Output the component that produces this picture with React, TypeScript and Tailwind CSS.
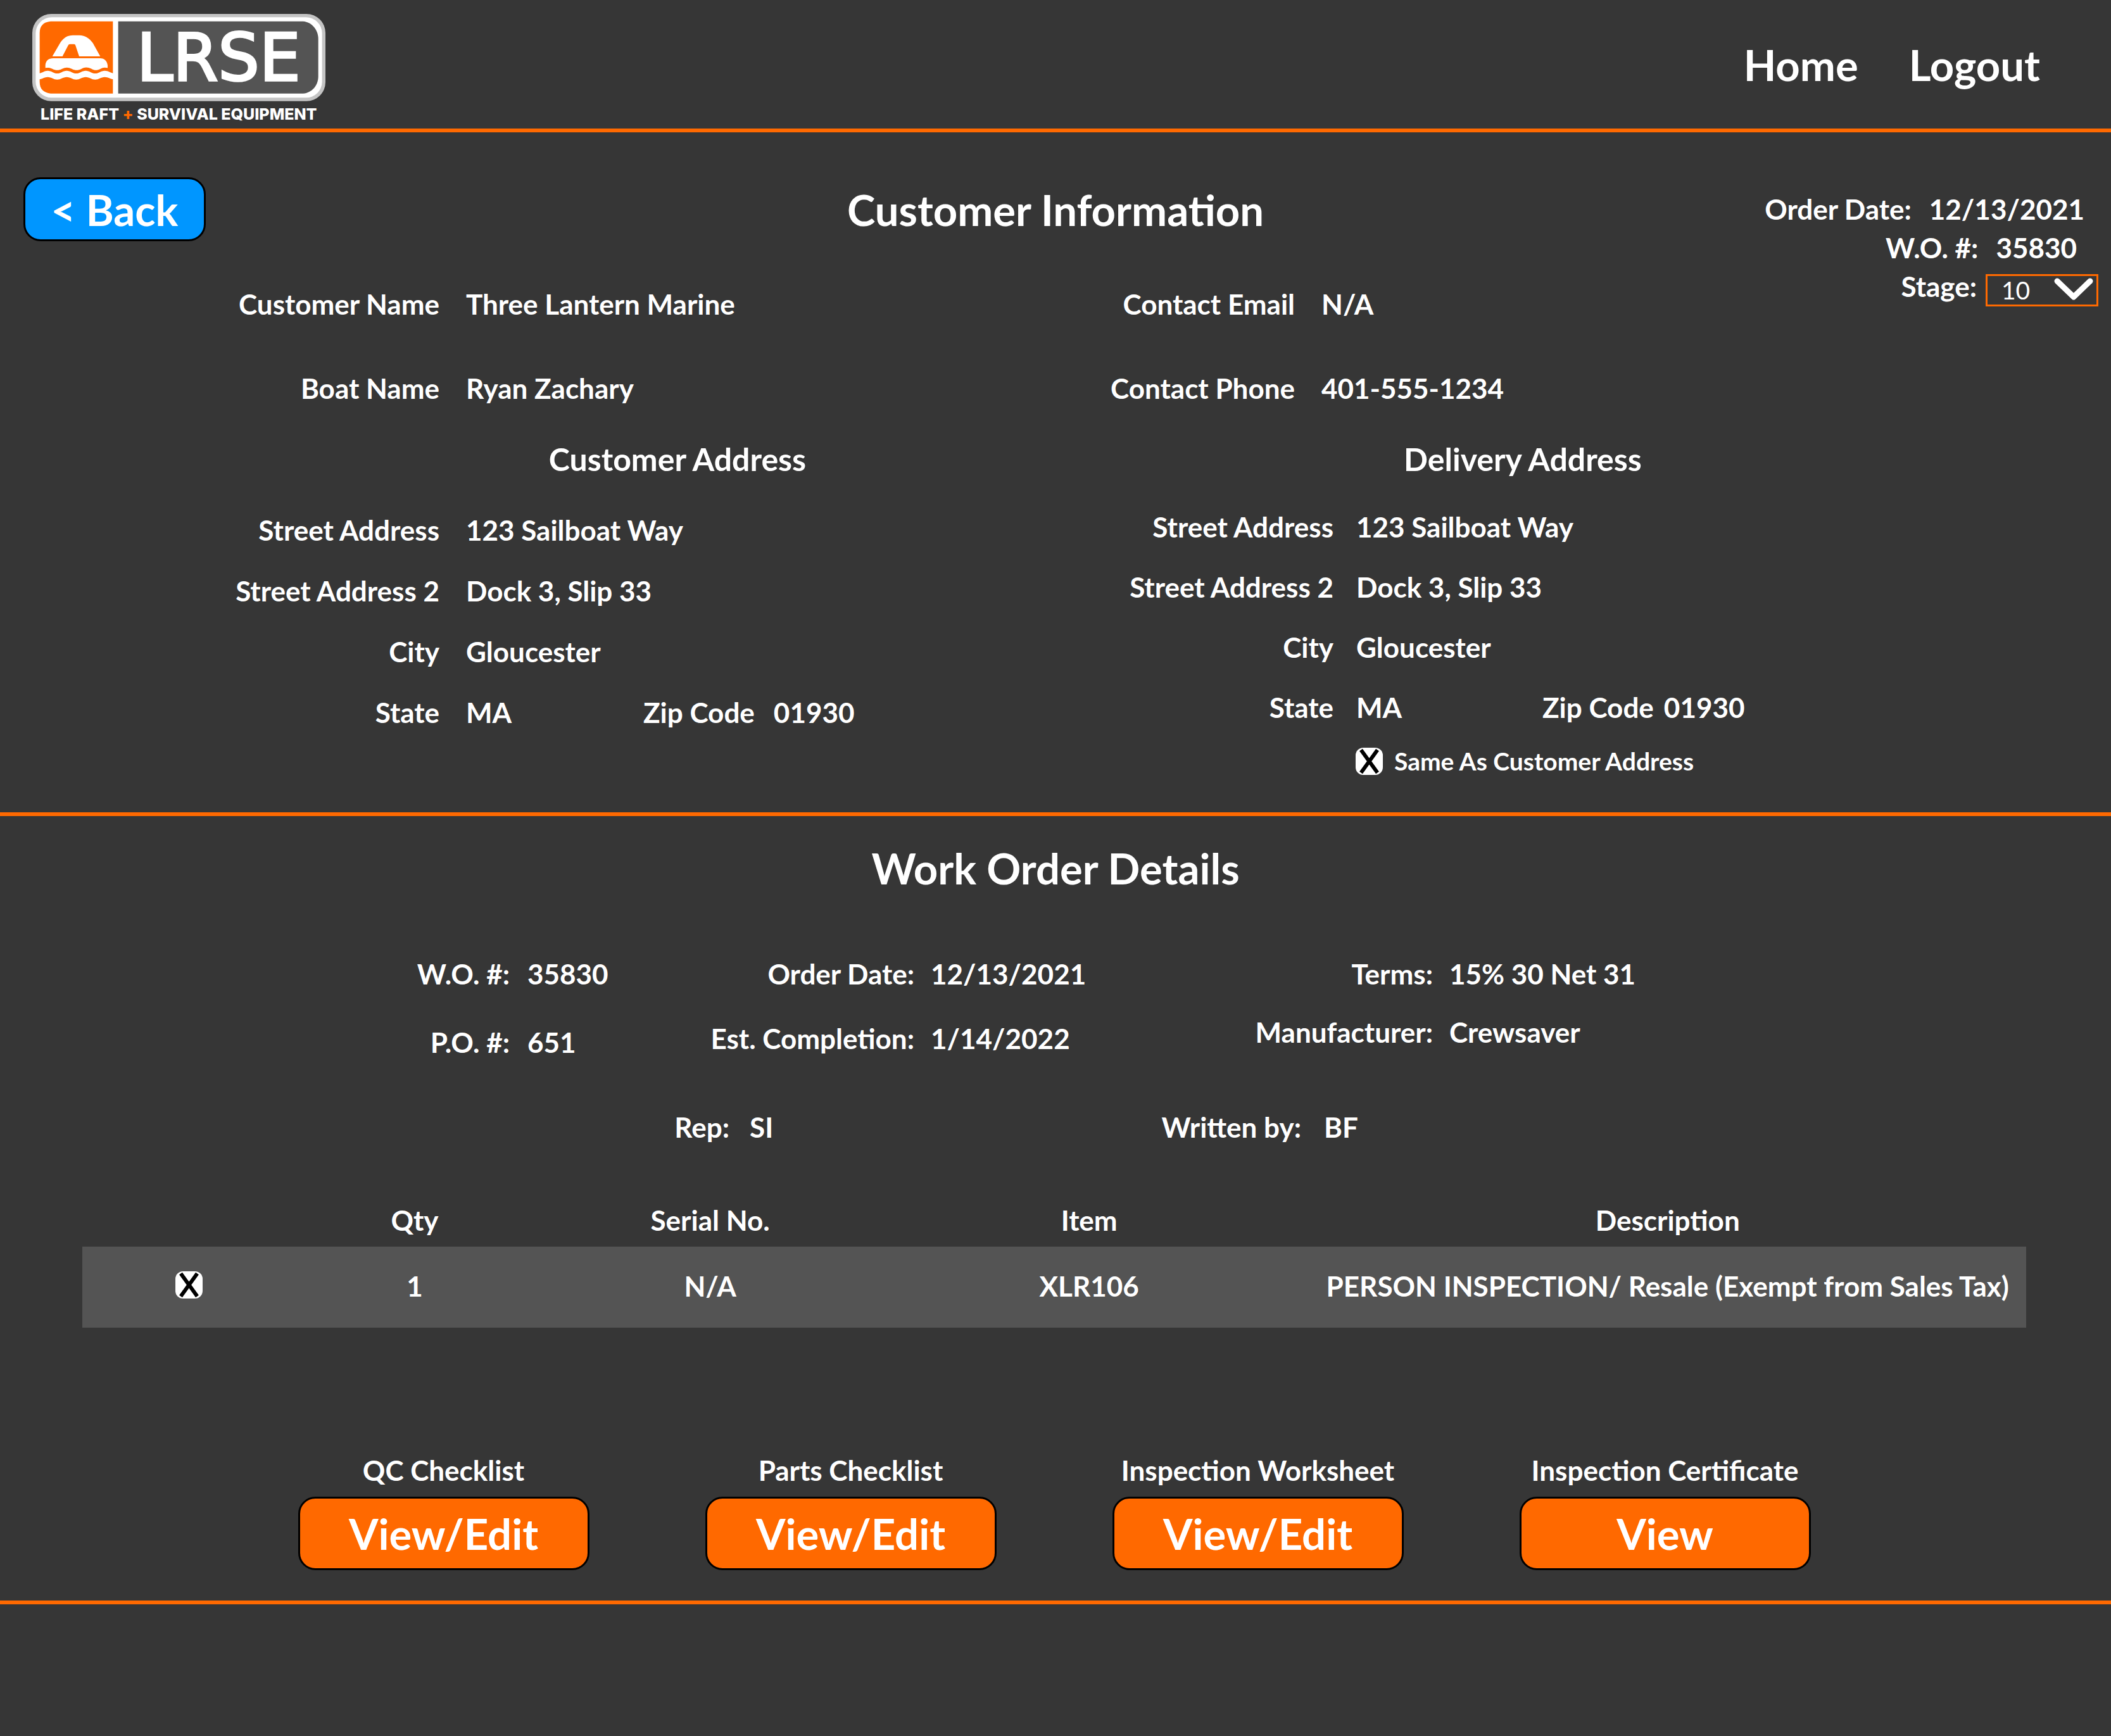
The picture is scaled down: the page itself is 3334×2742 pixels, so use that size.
import { useState, type ReactNode } from "react";

type FieldItem = { label: string; value: ReactNode };

function Logo() {
  return (
    <svg viewBox="60 60 1401 549" className="h-[183px] w-[467px]" role="img" aria-label="LRSE Life Raft + Survival Equipment">
      <rect x="63" y="66" width="1389" height="413" rx="90" fill="#c4c4c4" />
      <rect x="79" y="82" width="1357" height="381" rx="76" fill="#ffffff" />
      <path d="M150 101H445V443H150Q98 438 98 388V156Q98 106 150 101Z" fill="#ff6900" />
      <path d="M470 101H1346C1388 104 1418 142 1418 184V362C1418 404 1388 440 1346 443H470Z" fill="#545454" />
      <path
        d="M158 267L196 202C212 178 230 167 256 167H286C314 167 334 182 350 204L385 267H285L267 213Q265 209 260 209H242Q237 209 234 213L206 267Z"
        fill="#ffffff"
      />
      <path
        d="M125 322V308C127 288 140 276 162 276H384C405 276 418 290 420 310V322C404 318 396 321 386 326C370 334 358 334 344 326C324 317 312 317 296 326C280 334 266 334 250 326C234 318 220 318 204 326C188 334 174 334 158 326C146 320 138 320 125 322Z"
        fill="#ffffff"
      />
      <path
        d="M96 347C112 345 120 335 136 335C154 335 164 348 181 348C198 348 208 335 226 335C244 335 254 348 271 348C288 348 298 335 316 335C334 335 344 348 361 348C378 348 388 335 406 335C424 335 432 345 448 347V376C430 374 424 365 406 365C388 365 378 377 361 377C344 377 334 365 316 365C298 365 288 377 271 377C254 377 244 365 226 365C208 365 198 377 181 377C164 377 154 365 136 365C120 365 112 374 96 376Z"
        fill="#ffffff"
      />
      <text
        x="946"
        y="382"
        textAnchor="middle"
        fontSize="308"
        fontWeight="400"
        fill="#ffffff"
        stroke="#ffffff"
        strokeWidth="10"
        fontFamily="DejaVu Sans, sans-serif"
      >
        LRSE
      </text>
      <text x="757" y="567" textAnchor="middle" fontSize="75" fontWeight="800" fill="#ffffff" fontFamily="Inter, sans-serif">
        LIFE RAFT <tspan fill="#ff6900">+</tspan> SURVIVAL EQUIPMENT
      </text>
    </svg>
  );
}

function CrossedBox({ id, label }: { id: string; label?: string }) {
  return (
    <span className="grid size-[43px]">
      <input
        id={id}
        type="checkbox"
        defaultChecked
        aria-label={label}
        className="peer col-start-1 row-start-1 size-full appearance-none rounded-xl bg-white"
      />
      <svg
        viewBox="0 0 43 43"
        className="pointer-events-none invisible col-start-1 row-start-1 size-full peer-checked:visible"
        aria-hidden="true"
      >
        <path d="M8.500 3.500L34.500 39.500M34.500 3.500L8.500 39.500" stroke="#000000" strokeWidth="6" />
      </svg>
    </span>
  );
}

function Fields({ items, className, valueClass }: { items: FieldItem[]; className: string; valueClass: string }) {
  return (
    <dl className={`grid ${className}`}>
      {items.map((item) => (
        <div key={item.label} className="contents">
          <dt className="text-right whitespace-nowrap">{item.label}</dt>
          <dd className={`whitespace-nowrap ${valueClass}`}>{item.value}</dd>
        </div>
      ))}
    </dl>
  );
}

function StateZip({ stateClass, zipClass }: { stateClass: string; zipClass: string }) {
  return (
    <span className="flex">
      <span className={stateClass}>MA</span>
      <span className={zipClass}>
        <span>Zip Code</span>
        <span>01930</span>
      </span>
    </span>
  );
}

const documents = [
  { title: "QC Checklist", action: "View/Edit" },
  { title: "Parts Checklist", action: "View/Edit" },
  { title: "Inspection Worksheet", action: "View/Edit" },
  { title: "Inspection Certificate", action: "View" },
];

export default function App() {
  const [stage, setStage] = useState("10");

  return (
    <div className="min-h-screen bg-[#363636] font-['Lato',sans-serif] text-[44px] leading-[54px] font-bold text-white">
      <header className="flex items-start justify-between border-b-6 border-[#ff6900] pt-5 pr-[112px] pl-[50px]">
        <Logo />
        <nav className="flex gap-20 pt-[48px] text-[67px] leading-[68px]">
          <a href="#home">Home</a>
          <a href="#logout">Logout</a>
        </nav>
      </header>

      <main>
        <section className="grid grid-cols-[1fr_auto_1fr] border-b-6 border-[#ff6900] pt-[71px] pb-[43px]">
          <button
            type="button"
            className="col-start-1 row-start-1 ml-[37px] h-[101px] w-[288px] rounded-[27px] border-3 border-black bg-[#0096ff] text-[67px] leading-[68px]"
          >
            &lt; Back
          </button>
          <h1 className="col-start-2 row-start-1 self-center text-[67px] leading-[68px]">Customer Information</h1>

          <div className="z-10 col-start-3 row-span-2 row-start-1 mt-5 self-start justify-self-end leading-[61px]">
            <p className="flex justify-end gap-[28px] pr-[42px]">
              <span>Order Date:</span>
              <span>12/13/2021</span>
            </p>
            <p className="flex justify-end gap-[28px] pr-[54px]">
              <span>W.O. #:</span>
              <span>35830</span>
            </p>
            <div className="flex h-[61px] items-start justify-end gap-[14px] pr-5">
              <label htmlFor="stage">Stage:</label>
              <span className="mt-[11px] grid">
                <select
                  id="stage"
                  value={stage}
                  onChange={(event) => setStage(event.target.value)}
                  className="col-start-1 row-start-1 h-[51px] w-[178px] appearance-none border-3 border-[#ff6900] bg-transparent pl-[22px] text-[39px] leading-[45px] font-normal"
                >
                  <option>10</option>
                  <option>20</option>
                  <option>30</option>
                </select>
                <svg
                  viewBox="0 0 62 36"
                  className="pointer-events-none col-start-1 row-start-1 mt-[6px] mr-2 h-9 w-[62px] justify-self-end"
                  aria-hidden="true"
                >
                  <path d="M5 5L31 30L57 5" fill="none" stroke="#ffffff" strokeWidth="9" strokeLinecap="round" strokeLinejoin="round" />
                </svg>
              </span>
            </div>
          </div>

          <div className="col-span-3 col-start-1 row-start-2 mt-[33px] grid grid-cols-2">
            <Fields
              className="grid-cols-[694fr_973fr] leading-[133px]"
              valueClass="pl-[42px]"
              items={[
                { label: "Customer Name", value: "Three Lantern Marine" },
                { label: "Boat Name", value: "Ryan Zachary" },
              ]}
            />
            <Fields
              className="grid-cols-[378fr_1289fr] leading-[133px]"
              valueClass="pl-[42px]"
              items={[
                { label: "Contact Email", value: "N/A" },
                { label: "Contact Phone", value: "401-555-1234" },
              ]}
            />

            <div>
              <h2 className="pl-[52%] text-[50px] leading-[91px]">Customer Address</h2>
              <Fields
                className="mt-[18px] grid-cols-[694fr_973fr] leading-[96px]"
                valueClass="pl-[42px]"
                items={[
                  { label: "Street Address", value: "123 Sailboat Way" },
                  { label: "Street Address 2", value: "Dock 3, Slip 33" },
                  { label: "City", value: "Gloucester" },
                  { label: "State", value: <StateZip stateClass="w-[280px]" zipClass="flex gap-[30px]" /> },
                ]}
              />
            </div>

            <div>
              <h2 className="pl-[33%] text-[50px] leading-[91px]">Delivery Address</h2>
              <Fields
                className="mt-[14px] grid-cols-[439fr_1228fr] leading-[95px]"
                valueClass="pl-[36px]"
                items={[
                  { label: "Street Address", value: "123 Sailboat Way" },
                  { label: "Street Address 2", value: "Dock 3, Slip 33" },
                  { label: "City", value: "Gloucester" },
                  { label: "State", value: <StateZip stateClass="w-[294px]" zipClass="flex gap-[16px]" /> },
                ]}
              />
              <div className="grid grid-cols-[439fr_1228fr] text-[39px] leading-[75px]">
                <div className="col-start-2 flex items-center gap-[18px] pl-[35px]">
                  <CrossedBox id="same-address" />
                  <label htmlFor="same-address">Same As Customer Address</label>
                </div>
              </div>
            </div>
          </div>
        </section>

        <section className="border-b-6 border-[#ff6900] pt-12 pb-12">
          <h1 className="text-center text-[67px] leading-[68px]">Work Order Details</h1>

          <div className="mt-[106px] grid grid-cols-[1000fr_850fr_1484fr] items-start">
            <Fields
              className="grid-cols-[805fr_195fr] gap-y-[54px]"
              valueClass="pl-[28px]"
              items={[
                { label: "W.O. #:", value: "35830" },
                { label: "P.O. #:", value: "651" },
              ]}
            />
            <Fields
              className="grid-cols-[444fr_406fr] gap-y-[48px]"
              valueClass="pl-[26px]"
              items={[
                { label: "Order Date:", value: "12/13/2021" },
                { label: "Est. Completion:", value: "1/14/2022" },
              ]}
            />
            <Fields
              className="grid-cols-[413fr_1071fr] gap-y-[38px]"
              valueClass="pl-[26px]"
              items={[
                { label: "Terms:", value: "15% 30 Net 31" },
                { label: "Manufacturer:", value: "Crewsaver" },
              ]}
            />
          </div>

          <div className="mt-[80px] grid grid-cols-2">
            <Fields className="grid-cols-[1152fr_515fr]" valueClass="pl-[32px]" items={[{ label: "Rep:", value: "SI" }]} />
            <Fields className="grid-cols-[388fr_1279fr]" valueClass="pl-[36px]" items={[{ label: "Written by:", value: "BF" }]} />
          </div>

          <div className="mt-[77px] mr-[134px] ml-[130px]">
            <table className="w-full table-fixed text-center">
              <thead>
                <tr className="h-[85px]">
                  <th className="w-[11%]" aria-label="Selected" />
                  <th className="w-[12.2%]">Qty</th>
                  <th className="w-[18.2%]">Serial No.</th>
                  <th className="w-[20.8%]">Item</th>
                  <th className="pl-7">Description</th>
                </tr>
              </thead>
              <tbody>
                <tr className="h-32 bg-[#545454]">
                  <td className="pb-2">
                    <div className="flex justify-center">
                      <CrossedBox id="line-1" label="Select line 1" />
                    </div>
                  </td>
                  <td className="pb-1">1</td>
                  <td className="pb-1">N/A</td>
                  <td className="pb-1">XLR106</td>
                  <td className="pb-1 pl-7 whitespace-nowrap">PERSON INSPECTION/ Resale (Exempt from Sales Tax)</td>
                </tr>
              </tbody>
            </table>
          </div>

          <div className="mt-[198px] flex justify-center gap-[183px] pr-1">
            {documents.map((doc) => (
              <div key={doc.title} className="flex w-[460px] flex-col gap-[15px] text-center">
                <h3 className="whitespace-nowrap">{doc.title}</h3>
                <button
                  type="button"
                  aria-label={`${doc.action} ${doc.title}`}
                  className="h-[116px] rounded-[27px] border-3 border-black bg-[#ff6900] text-[67px] leading-[68px]"
                >
                  {doc.action}
                </button>
              </div>
            ))}
          </div>
        </section>
      </main>
    </div>
  );
}
